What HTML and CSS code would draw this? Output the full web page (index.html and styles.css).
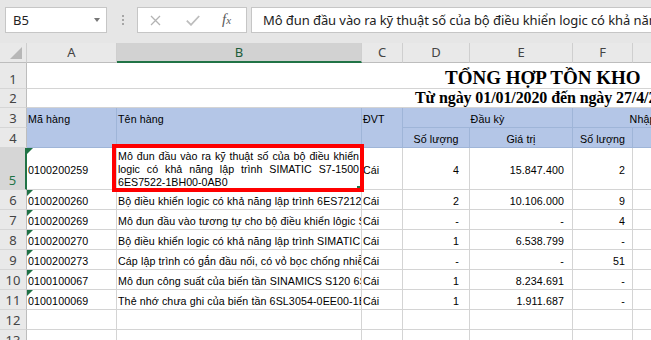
FILE: index.html
```html
<!DOCTYPE html>
<html lang="vi">
<head>
<meta charset="utf-8">
<title>Tổng hợp tồn kho</title>
<link rel="stylesheet" href="styles.css">
</head>
<body>
<div class="fbar">
  <div class="namebox"><span>B5</span><span class="caret"></span></div>
  <div class="grip"><i></i><i></i><i></i></div>
  <div class="btns">
    <svg class="ic-x" width="11" height="11" viewBox="0 0 11 11"><path d="M1 1L10 10M10 1L1 10" stroke="#b3b3b3" stroke-width="1.3" fill="none"/></svg>
    <svg class="ic-ok" width="14" height="11" viewBox="0 0 14 11"><path d="M0.8 5.6L5 9.8L13.2 1" stroke="#bdbdbd" stroke-width="1.8" fill="none"/></svg>
    <span class="fx"><i>f</i><i class="fxx">x</i></span>
  </div>
  <div class="formula">Mô đun đầu vào ra kỹ thuật số của bộ điều khiển logic có khả năng lập trình SIMATIC S7-1500 6ES7522-1BH00-0AB0</div>
</div>

<div class="sheet">
  <div class="ch corner"></div>
  <div class="ch">A</div>
  <div class="ch sel">B</div>
  <div class="ch">C</div>
  <div class="ch">D</div>
  <div class="ch">E</div>
  <div class="ch">F</div>
  <div class="ch">G</div>

  <div class="rh">1</div>
  <div class="cell title">TỔNG HỢP TỒN KHO</div>

  <div class="rh">2</div>
  <div class="cell sub">Từ ngày 01/01/2020 đến ngày 27/4/2020</div>

  <div class="rh">3</div>
  <div class="cell h r2">Mã hàng</div>
  <div class="cell h r2">Tên hàng</div>
  <div class="cell h r2">ĐVT</div>
  <div class="cell h c2 center">Đầu kỳ</div>
  <div class="cell h c2 center">Nhập kỳ</div>

  <div class="rh">4</div>
  <div class="cell h center">Số lượng</div>
  <div class="cell h center">Giá trị</div>
  <div class="cell h center">Số lượng</div>
  <div class="cell h center">Giá trị</div>

  <div class="rh sel">5</div>
  <div class="cell tx mid">0100200259</div>
  <div class="cell wrap">
    <span class="jl">Mô đun đầu vào ra kỹ thuật số của bộ điều khiển</span>
    <span class="jl">logic có khả năng lập trình SIMATIC S7-1500</span>
    <span>6ES7522-1BH00-0AB0</span>
    <span class="handle"></span>
  </div>
  <div class="cell mid">Cái</div>
  <div class="cell mid num d">4</div>
  <div class="cell mid num e">15.847.400</div>
  <div class="cell mid num f">2</div>
  <div class="cell mid"></div>

  <div class="rh">6</div>
  <div class="cell tx">0100200260</div>
  <div class="cell">Bộ điều khiển logic có khả năng lập trình 6ES7212-1AE40-0XB0</div>
  <div class="cell">Cái</div>
  <div class="cell num d">2</div>
  <div class="cell num e">10.106.000</div>
  <div class="cell num f">9</div>
  <div class="cell"></div>

  <div class="rh">7</div>
  <div class="cell tx">0100200269</div>
  <div class="cell">Mô đun đầu vào tương tự cho bộ điều khiển lôgic  S7-1200</div>
  <div class="cell">Cái</div>
  <div class="cell num d">-</div>
  <div class="cell num e">-</div>
  <div class="cell num f">4</div>
  <div class="cell"></div>

  <div class="rh">8</div>
  <div class="cell tx">0100200270</div>
  <div class="cell">Bộ điều khiển logic có khả năng lập trình SIMATIC S7-1200</div>
  <div class="cell">Cái</div>
  <div class="cell num d">1</div>
  <div class="cell num e">6.538.799</div>
  <div class="cell num f">-</div>
  <div class="cell"></div>

  <div class="rh">9</div>
  <div class="cell tx">0100200273</div>
  <div class="cell">Cáp lập trình có gắn đầu nối, có vỏ bọc chống nhiễu</div>
  <div class="cell">Cái</div>
  <div class="cell num d">-</div>
  <div class="cell num e">-</div>
  <div class="cell num f">51</div>
  <div class="cell"></div>

  <div class="rh">10</div>
  <div class="cell tx">0100100067</div>
  <div class="cell">Mô đun công suất của biến tần SINAMICS S120 6SL3120-1TE15-0AD0</div>
  <div class="cell">Cái</div>
  <div class="cell num d">1</div>
  <div class="cell num e">8.234.691</div>
  <div class="cell num f">-</div>
  <div class="cell"></div>

  <div class="rh">11</div>
  <div class="cell tx">0100100069</div>
  <div class="cell">Thẻ nhớ chưa ghi của biến tần 6SL3054-0EE00-1BA0</div>
  <div class="cell">Cái</div>
  <div class="cell num d">1</div>
  <div class="cell num e">1.911.687</div>
  <div class="cell num f">-</div>
  <div class="cell"></div>

  <div class="rh">12</div>
  <div class="cell"></div><div class="cell"></div><div class="cell"></div><div class="cell"></div><div class="cell"></div><div class="cell"></div><div class="cell"></div>

  <div class="rh">13</div>
  <div class="cell"></div><div class="cell"></div><div class="cell"></div><div class="cell"></div><div class="cell"></div><div class="cell"></div><div class="cell"></div>

  <div class="callout"></div>
</div>
</body>
</html>
```
FILE: styles.css
```css
* { box-sizing: border-box; }
html, body { margin: 0; padding: 0; }
body {
  width: 651px;
  height: 340px;
  overflow: hidden;
  background: #fff;
  font-family: "Liberation Sans", Arial, sans-serif;
}

/* formula bar */
.fbar {
  height: 43px;
  background: #e6e6e6;
  display: flex;
  align-items: flex-start;
  padding: 7px 0 0 5px;
}
.namebox {
  width: 102px;
  height: 26px;
  background: #fff;
  border: 1px solid #c6c6c6;
  display: flex;
  align-items: center;
  justify-content: space-between;
  padding: 0 6px 0 7px;
  font: 13px "Noto Sans", sans-serif;
  color: #222;
}
.caret {
  width: 0;
  height: 0;
  border-left: 3.5px solid transparent;
  border-right: 3.5px solid transparent;
  border-top: 4px solid #777;
}
.grip {
  margin: 8px 0 0 15px;
  display: flex;
  flex-direction: column;
  gap: 2px;
}
.grip i {
  display: block;
  width: 2px;
  height: 2px;
  background: #a6a6a6;
}
.btns {
  margin-left: 13px;
  width: 110px;
  height: 26px;
  background: #fff;
  border: 1px solid #c6c6c6;
  display: flex;
  align-items: center;
  padding-left: 12px;
}
.ic-ok { margin-left: 25px; }
.fx {
  margin-left: 22px;
  font-family: "Liberation Serif", serif;
  color: #5a5a5a;
  font-size: 15px;
  line-height: 15px;
}
.fx i { font-style: italic; }
.fx .fxx { font-size: 11px; }
.formula {
  margin-left: 4px;
  flex: 1;
  height: 26px;
  background: #fff;
  border: 1px solid #c6c6c6;
  border-right: none;
  padding-left: 11px;
  font: 13px "Noto Sans", sans-serif;
  letter-spacing: -0.08px;
  line-height: 24px;
  color: #222;
  white-space: nowrap;
  overflow: hidden;
}

/* sheet */
.sheet {
  position: relative;
  display: grid;
  grid-template-columns: 27px 90px 245px 41px 67px 103px 60px 94px;
  grid-template-rows: 20px 26px 19px 20px 20px 42px repeat(8, 20px);
  width: 727px;
}
.ch {
  background: #e9e9e9;
  border-right: 1px solid #cfcfcf;
  border-bottom: 1px solid #bdbdbd;
  text-align: center;
  font: 13px "Noto Sans", sans-serif;
  line-height: 19px;
  color: #444;
}
.ch.sel {
  background: #d2d2d2;
  border-bottom: 2px solid #217346;
  color: #1e5d3a;
}
.corner { position: relative; }
.corner::after {
  content: "";
  position: absolute;
  right: 4px;
  bottom: 3px;
  width: 12px;
  height: 12px;
  background: #b7b7b7;
  clip-path: polygon(100% 0, 100% 100%, 0 100%);
}
.rh {
  background: #e9e9e9;
  border-right: 1px solid #bdbdbd;
  border-bottom: 1px solid #d6d6d6;
  display: flex;
  align-items: flex-end;
  justify-content: center;
  font: 13px "Noto Sans", sans-serif;
  line-height: 17px;
  color: #444;
}
.rh.sel {
  background: #d6d6d6;
  border-right: 2px solid #217346;
  color: #217346;
}
.cell {
  border-right: 1px solid #d4d4d4;
  border-bottom: 1px solid #d4d4d4;
  font-size: 10.67px;
  letter-spacing: 0.1px;
  line-height: 16px;
  padding: 3px 1px 0 1px;
  white-space: nowrap;
  overflow: hidden;
  color: #000;
}
.title {
  grid-column: span 7;
  border-right: none;
  display: flex;
  align-items: flex-end;
  padding: 0 0 0 418px;
  font: bold 19px "Liberation Serif", serif;
  letter-spacing: 0;
  line-height: 21px;
}
.sub {
  grid-column: span 7;
  border-right: none;
  padding: 0 0 0 388px;
  font: bold 16px "Liberation Serif", serif;
  letter-spacing: -0.1px;
  line-height: 18px;
}
.h {
  background: #b4c6e7;
  border-right-color: #9fb5d8;
  border-bottom-color: #9fb5d8;
}
.r2 { grid-row: span 2; }
.c2 { grid-column: span 2; }
.center { text-align: center; }
.num { text-align: right; }
.d { padding-right: 10px; }
.e { padding-right: 8px; }
.f { padding-right: 7px; }
.mid {
  display: flex;
  align-items: center;
}
.mid.num { justify-content: flex-end; }
.tx { position: relative; }
.tx::before {
  content: "";
  position: absolute;
  left: 0;
  top: 0;
  border-top: 6px solid #1e7145;
  border-right: 6px solid transparent;
}
.wrap {
  position: relative;
  white-space: normal;
  display: flex;
  flex-direction: column;
  justify-content: center;
  line-height: 13px;
  letter-spacing: 0;
  padding: 2px 2px 0 1px;
}
.jl {
  display: block;
  text-align: justify;
  text-align-last: justify;
}
.handle {
  position: absolute;
  right: 1px;
  bottom: 0;
  width: 3px;
  height: 3px;
  background: #217346;
}
.callout {
  position: absolute;
  left: 112px;
  top: 101px;
  width: 252px;
  height: 48px;
  border: 4px solid #ff0000;
}
```
